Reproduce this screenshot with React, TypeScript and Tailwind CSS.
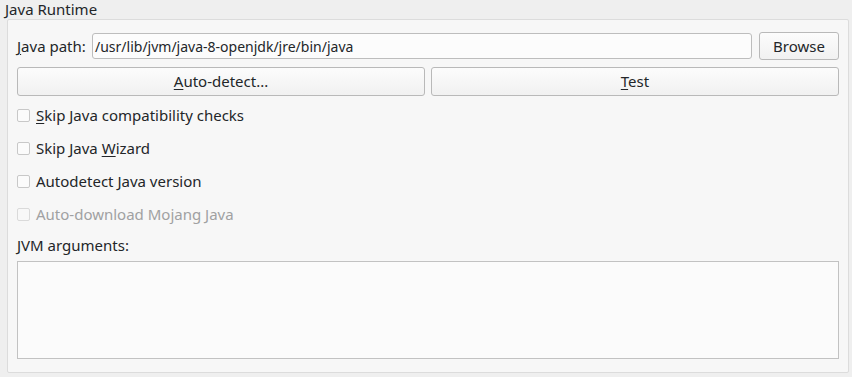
import React from "react";

const Btn = ({ children, className = "" }: { children: React.ReactNode; className?: string }) => (
  <div
    className={`flex items-center justify-center rounded-[3px] border border-[#b9b9b9] bg-gradient-to-b from-[#fcfcfc] to-[#f1f1f1] text-[#232629] ${className}`}
  >
    {children}
  </div>
);

const Check = ({ children, disabled = false }: { children: React.ReactNode; disabled?: boolean }) => (
  <div className="flex h-[33px] items-center">
    <div className={`h-[13px] w-[13px] rounded-[2px] border ${disabled ? "border-[#dadada] bg-[#f8f8f8]" : "border-[#c8c8c8] bg-[#fbfbfb]"}`} />
    <span className={`ml-[6px] ${disabled ? "text-[#a0a1a2]" : "text-[#232629]"}`}>{children}</span>
  </div>
);

export default function App() {
  return (
    <div
      className="h-[377px] w-[852px] bg-[#efefef] text-[15px] text-[#232629]"
      style={{ fontFamily: '"Noto Sans", sans-serif' }}
    >
      <div className="pl-[5px] pt-[0px] leading-[19px]">Java Runtime</div>
      <div className="ml-[7px] mr-[3px] mt-[0px] h-[354px] rounded-[2px] border border-[#dcdcdc] bg-[#f7f7f7] px-[9px] pt-[12px]">
        <div className="flex h-[28px] items-center">
          <span className="w-[75px]">
            <u className="underline-offset-2">J</u>ava path:
          </span>
          <div className="flex h-[26px] flex-1 items-center rounded-[3px] border border-[#bdbdbd] bg-[#fcfcfc] pl-[2px] text-[14px]">
            /usr/lib/jvm/java-8-openjdk/jre/bin/java
          </div>
          <Btn className="ml-[7px] h-[28px] w-[80px]">Browse</Btn>
        </div>
        <div className="mt-[7px] flex h-[29px] gap-[6px]">
          <Btn className="flex-1">
            <span><u className="underline-offset-2">A</u>uto-detect...</span>
          </Btn>
          <Btn className="flex-1">
            <span><u className="underline-offset-2">T</u>est</span>
          </Btn>
        </div>
        <div className="mt-[3px]">
          <Check><u className="underline-offset-2">S</u>kip Java compatibility checks</Check>
          <Check>Skip Java <u className="underline-offset-2">W</u>izard</Check>
          <Check>Autodetect Java version</Check>
          <Check disabled>Auto-download Mojang Java</Check>
        </div>
        <div className="mt-[4px] leading-[20px]">JVM arguments:</div>
        <div className="mt-[6px] h-[98px] border border-[#c2c2c2] bg-[#fbfbfb]" />
      </div>
    </div>
  );
}
